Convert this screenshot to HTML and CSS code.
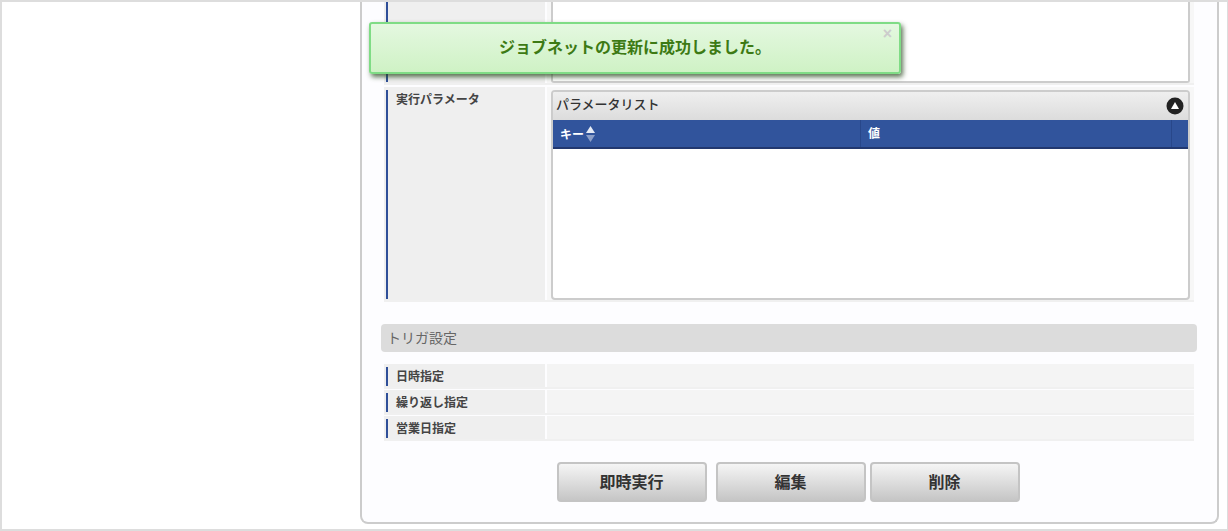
FILE: index.html
```html
<!DOCTYPE html>
<html lang="ja">
<head>
<meta charset="utf-8">
<title>ジョブネット詳細</title>
<link rel="stylesheet" href="styles.css">
</head>
<body>
<div class="frame">
  <main class="panel">
    <div class="form-table">
      <div class="row row-first">
        <div class="label"></div>
        <div class="value"><div class="textbox"></div></div>
      </div>
      <div class="row row-param">
        <div class="label"><span class="label-text">実行パラメータ</span></div>
        <div class="value">
          <section class="grid">
            <header class="grid-title">
              <span>パラメータリスト</span>
              <svg class="collapse" width="18" height="18" viewBox="0 0 18 18"><circle cx="9" cy="9" r="8.500" fill="#222"/><path d="M9 5 13 12H5z" fill="#fff"/></svg>
            </header>
            <div class="grid-head">
              <div class="col col-key">キー<svg class="sort" width="9" height="16" viewBox="0 0 9 16"><path d="M4.500 0 9 7H0z" fill="#e6ebf5"/><path d="M0 9h9l-4.500 7z" fill="#8c9fc8"/></svg></div>
              <div class="col col-val">値</div>
              <div class="col col-end"></div>
            </div>
          </section>
        </div>
      </div>
    </div>
    <h2 class="section-title">トリガ設定</h2>
    <div class="form-table">
      <div class="row row-small"><div class="label"><span class="label-text">日時指定</span></div><div class="value"></div></div>
      <div class="row row-small"><div class="label"><span class="label-text">繰り返し指定</span></div><div class="value"></div></div>
      <div class="row row-small"><div class="label"><span class="label-text">営業日指定</span></div><div class="value"></div></div>
    </div>
    <div class="actions">
      <button class="btn btn-run" type="button">即時実行</button>
      <button class="btn" type="button">編集</button>
      <button class="btn" type="button">削除</button>
    </div>
  </main>
  <div class="toast">
    <span class="toast-close">×</span>
    <span class="toast-text">ジョブネットの更新に成功しました。</span>
  </div>
</div>
</body>
</html>
```
FILE: styles.css
```css
* { box-sizing: border-box; }
html, body { margin: 0; padding: 0; background: #fff; }
body { font-family: "Noto Sans CJK JP", "Liberation Sans", sans-serif; color: #333; }

.frame {
  position: relative;
  width: 1228px;
  height: 531px;
  overflow: hidden;
  border: solid #ddd;
  border-width: 2px 1px 2px 2px;
  padding-left: 358px;
}

.panel {
  width: 859px;
  height: 522px;
  border: 2px solid #ccc;
  border-top: 0;
  border-radius: 0 0 8px 8px;
  background: #fdfdff;
  padding-left: 19px;
}

.form-table { display: flex; flex-direction: column; width: 810px; margin-left: 3px; }

.row { display: flex; gap: 2px; border-bottom: 2px solid #f0f0f0; }
.row-first { height: 83px; margin-bottom: 2px; }
.row-param { height: 215px; }
.row-small { height: 25px; margin-bottom: 1px; }

.label {
  width: 161px;
  background: #efefef;
  padding: 3px 2px 1px;
}
.label-text {
  display: block;
  height: 100%;
  border-left: 2px solid #2f4f99;
  padding-left: 8px;
  font-size: 12px;
  line-height: 18px;
  font-weight: 700;
  color: #444;
}
.row-first .label { padding-top: 0; }
.row-first .label::before {
  content: "";
  display: block;
  height: 100%;
  border-left: 2px solid #2f4f99;
}

.value { flex: 1; background: #f4f4f4; padding: 0 4px; }
.row-first .value, .row-param .value { background: #f7f7f7; }

.textbox {
  height: 81px;
  background: #fff;
  border: 2px solid #ccc;
  border-top: 0;
  border-radius: 0 0 3px 3px;
}

.grid {
  height: 210px;
  margin-top: 3px;
  background: #fff;
  border: 2px solid #ccc;
  border-radius: 4px;
  overflow: hidden;
}
.grid-title {
  display: flex;
  justify-content: space-between;
  align-items: center;
  height: 28px;
  padding: 0 4px 0 3px;
  background: linear-gradient(#efefef, #dcdcdc);
  font-size: 13px;
  line-height: 20px;
  color: #333;
}
.grid-title span { margin-top: -5px; font-weight: 500; }
.grid-head {
  display: flex;
  height: 29px;
  background: #31549c;
  border-bottom: 2px solid #22386f;
  color: #fff;
  font-size: 12px;
  line-height: 26px;
  font-weight: 700;
}
.col { padding-left: 7px; border-right: 1px solid #28478a; }
.col-key { width: 308px; display: flex; align-items: center; }
.col-val { width: 311px; }
.col-end { flex: 1; border-right: 0; }
.sort { margin-left: 2px; }

.section-title {
  width: 816px;
  height: 28px;
  margin: 22px 0 12px;
  padding-left: 6px;
  background: #dcdcdc;
  border-radius: 4px;
  font-size: 14px;
  font-weight: 400;
  line-height: 26px;
  color: #666;
}

.actions {
  display: flex;
  justify-content: center;
  gap: 4px;
  margin-top: 20px;
  padding-right: 22px;
}
.btn {
  width: 150px;
  height: 40px;
  padding: 0 0 3px;
  border: 2px solid #c4c4c4;
  border-radius: 4px;
  background: linear-gradient(#f5f5f5, #c6c6c6);
  font-family: inherit;
  font-size: 16px;
  font-weight: 700;
  line-height: 24px;
  color: #333;
}
.btn-run { margin-right: 5px; }

.toast {
  position: absolute;
  left: 367px;
  top: 20px;
  width: 532px;
  height: 52px;
  display: flex;
  align-items: center;
  justify-content: center;
  padding-bottom: 5px;
  border: 2px solid #7fdc85;
  border-radius: 3px;
  background: linear-gradient(#e4f8e0, #cff2c5);
  box-shadow: 2px 3px 5px rgba(40, 70, 30, 0.75);
}
.toast-text {
  font-size: 16px;
  font-weight: 700;
  line-height: 20px;
  color: #3d7a14;
}
.toast-close {
  position: absolute;
  top: 2px;
  right: 7px;
  font-family: "Liberation Sans", sans-serif;
  font-size: 16px;
  font-weight: 700;
  line-height: 16px;
  color: #ccc;
}
```
